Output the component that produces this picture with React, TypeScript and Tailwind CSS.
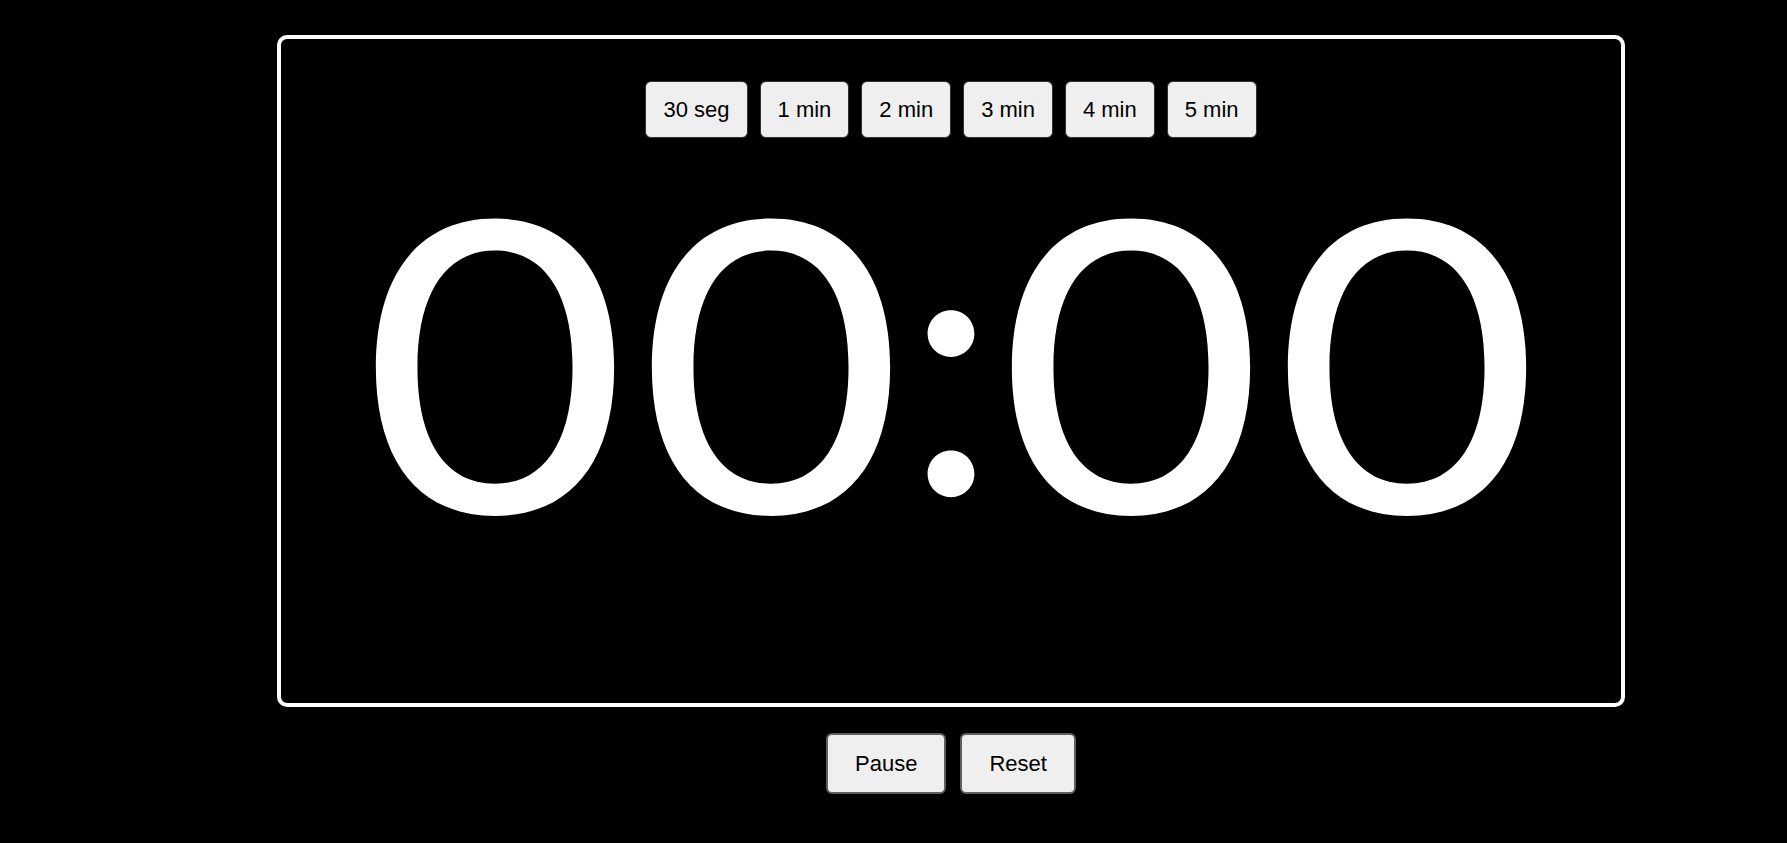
import React from "react";

const presets = ["30 seg", "1 min", "2 min", "3 min", "4 min", "5 min"];

function Digit({ d }: { d: string }) {
  return (
    <span className="block w-[276px] text-center text-[398px] leading-none scale-x-[1.17]">
      {d}
    </span>
  );
}

export default function App() {
  return (
    <div className="min-h-[843px] w-full bg-black overflow-hidden" style={{ fontFamily: '"Liberation Sans", Arial, sans-serif' }}>
      <div className="ml-[277px] w-[1348px] pt-[35px]">
        <div className="h-[672px] rounded-[10px] border-4 border-white flex flex-col items-center pt-[42px]">
          <div className="flex gap-[12px]">
            {presets.map((p) => (
              <button
                key={p}
                className="bg-[#efefef] text-black text-[22px] leading-[25px] px-[17px] py-[15px] border border-[#333333] rounded-[6px]"
              >
                {p}
              </button>
            ))}
          </div>
          <div
            className="mt-[30px] flex items-start text-white whitespace-nowrap"
            style={{ fontFamily: 'Inter, "Open Sans", sans-serif' }}
          >
            <Digit d="0" />
            <Digit d="0" />
            <span className="flex justify-center w-[84px] mt-[21px] text-[355px] leading-none">
              <span>:</span>
            </span>
            <Digit d="0" />
            <Digit d="0" />
          </div>
        </div>
        <div className="mt-[26px] flex justify-center gap-[14px]">
          <button className="bg-[#efefef] text-black text-[22px] leading-[25px] px-[27px] py-4 border-2 border-[#5f5f5f] rounded-[6px]">
            Pause
          </button>
          <button className="bg-[#efefef] text-black text-[22px] leading-[25px] px-[27px] py-4 border-2 border-[#5f5f5f] rounded-[6px]">
            Reset
          </button>
        </div>
      </div>
    </div>
  );
}
